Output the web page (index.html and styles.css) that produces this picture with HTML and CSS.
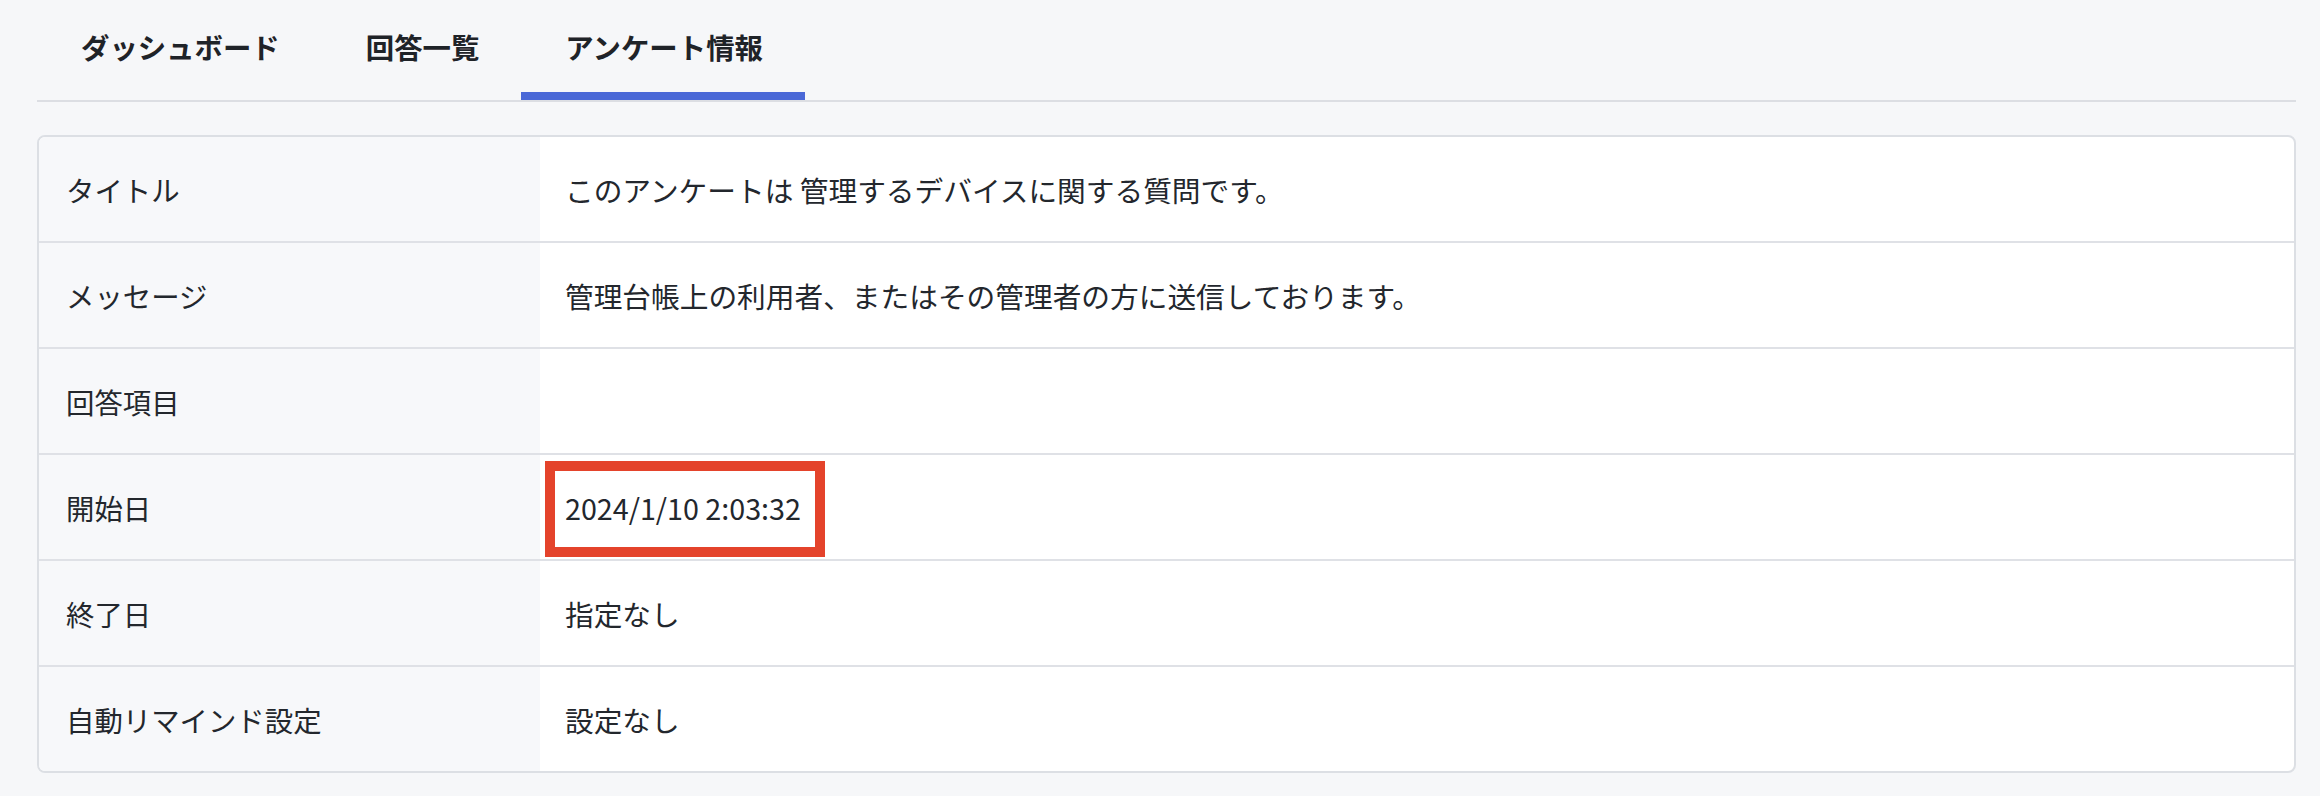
FILE: index.html
```html
<!DOCTYPE html>
<html lang="ja">
<head>
  <meta charset="UTF-8">
  <meta name="viewport" content="width=device-width, initial-scale=1.0">
  <title>アンケート情報</title>
  <link rel="stylesheet" href="styles.css">
</head>
<body>
  <div class="container">
    <nav class="tabs">
      <a class="tab">ダッシュボード</a>
      <a class="tab">回答一覧</a>
      <a class="tab active">アンケート情報</a>
    </nav>

    <div class="info-card">
      <div class="info-row">
        <div class="info-label">タイトル</div>
        <div class="info-value">このアンケートは 管理するデバイスに関する質問です。</div>
      </div>
      <div class="info-row">
        <div class="info-label">メッセージ</div>
        <div class="info-value">管理台帳上の利用者、またはその管理者の方に送信しております。</div>
      </div>
      <div class="info-row">
        <div class="info-label">回答項目</div>
        <div class="info-value"></div>
      </div>
      <div class="info-row">
        <div class="info-label">開始日</div>
        <div class="info-value">
          2024/1/10 2:03:32
          <span class="highlight"></span>
        </div>
      </div>
      <div class="info-row">
        <div class="info-label">終了日</div>
        <div class="info-value">指定なし</div>
      </div>
      <div class="info-row">
        <div class="info-label">自動リマインド設定</div>
        <div class="info-value">設定なし</div>
      </div>
    </div>
  </div>
</body>
</html>
```

FILE: styles.css
```css
body {
  margin: 0;
  background-color: #f6f7f9;
  color: #23272d;
  font-family: "Noto Sans CJK JP", "Noto Sans", sans-serif;
}
.container {
  padding: 0 24px 0 37px;
}
.tabs {
  display: flex;
  border-bottom: 2px solid #dcdee3;
}
.tab {
  padding: 33px 42px 31px 44px;
  font-size: 28.4px;
  line-height: 28px;
  font-weight: bold;
  color: #1f2328;
  border-bottom: 8px solid transparent;
  cursor: pointer;
}
.tab.active {
  border-bottom-color: #4a68d7;
}
.info-card {
  margin-top: 33px;
  background-color: #fff;
  border: 2px solid #dcdfe4;
  border-radius: 8px;
  overflow: hidden;
}
.info-row {
  display: flex;
  height: 104px;
  border-bottom: 2px solid #dfe1e6;
}
.info-row:last-child {
  border-bottom: none;
}
.info-label {
  width: 501px;
  flex-shrink: 0;
  box-sizing: border-box;
  padding-left: 27px;
  display: flex;
  align-items: center;
  background-color: #f7f8fa;
  font-size: 28.4px;
}
.info-value {
  position: relative;
  flex: 1;
  padding-left: 25px;
  display: flex;
  align-items: center;
  font-size: 28.7px;
}
.highlight {
  position: absolute;
  left: 5px;
  top: 6px;
  width: 260px;
  height: 76px;
  border: 10px solid #e4432b;
}
```
